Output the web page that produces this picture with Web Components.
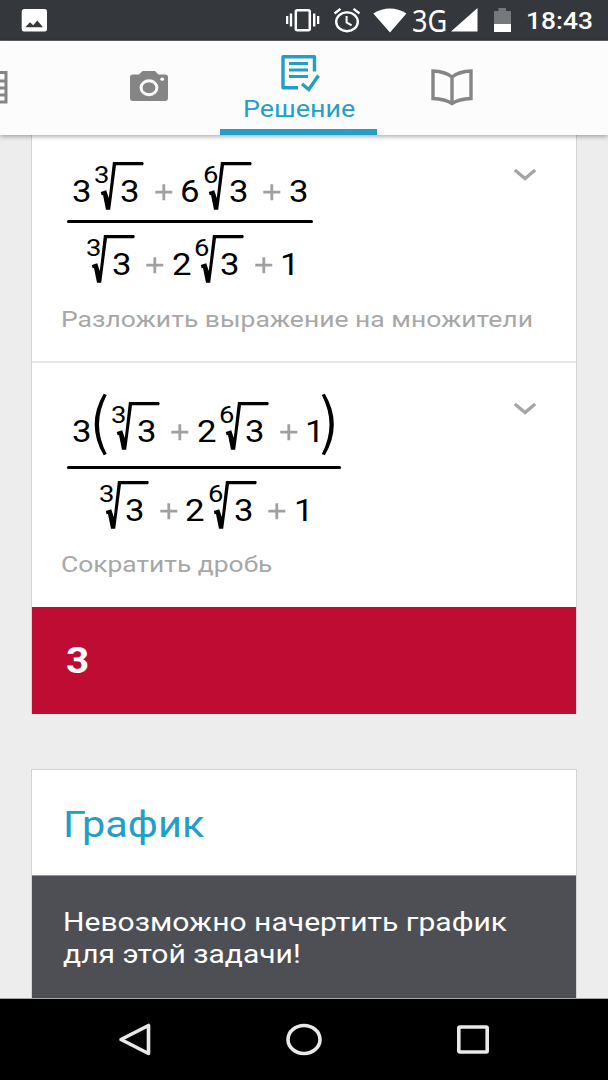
<!DOCTYPE html>
<html lang="ru">
<head>
<meta charset="utf-8">
<title>Решение</title>
<style>
html,body{margin:0;padding:0}
body{width:608px;height:1080px;overflow:hidden;font-family:Roboto,"Noto Sans",sans-serif;background:#ededed}
</style>
</head>
<body>
<math-app></math-app>
<script>
const define = (name, html, after) => customElements.define(name, class extends HTMLElement {
  constructor() {
    super();
    this.attachShadow({mode: 'open'});
  }
  connectedCallback() {
    this.shadowRoot.innerHTML = typeof html === 'function' ? html(this) : html;
    if (after) after(this);
  }
});

// One line of text stretched horizontally to the given width.
define('fit-label', el => `<style>
:host{display:block;width:${el.getAttribute('w')}px;white-space:nowrap}
span{display:inline-block;transform-origin:0 50%}
</style><span>${el.getAttribute('text')}</span>`, el => {
  const s = el.shadowRoot.querySelector('span');
  s.style.transform = `scaleX(${el.getAttribute('w') / s.offsetWidth})`;
});

define('status-bar', `<style>
:host{display:flex;box-sizing:border-box;height:41px;background:#34373b;border-bottom:1px solid #63666a;color:#fff;padding:0 0 0 21px;align-items:flex-start}
svg{display:block;flex:none;margin-top:8px}
.net{font:400 31px/40px "Noto Sans";margin:0 3px 0 5px;height:40px}
.time{font-size:24px;font-weight:500;line-height:42px;margin-left:14px}
</style>
<svg width="26" height="24" viewBox="0 0 26 24"><path fill="#fff" fill-rule="evenodd" d="M3 1H23.500Q26 1 26 3.500V21Q26 23.500 23.500 23.500H3Q.7 23.500.7 21V3.500Q.7 1 3 1ZM4.300 19.200H22L16.300 12.500L12.200 17.300L9 14.200Z"/></svg>
<svg style="margin-left:238px" width="36" height="24" viewBox="0 0 36 24"><g fill="#fff"><path d="M1 8h2.300v8H1zM4.800 5.500h2.400v13H4.800zM28 5.500h2.400v13H28zM32 8h2.300v8H32z"/></g><rect x="10.800" y="2.200" width="14" height="20" rx="1.500" fill="none" stroke="#fff" stroke-width="2.500"/></svg>
<svg style="margin-left:12px" width="28" height="25" viewBox="0 0 28 25"><g fill="none" stroke="#fff" stroke-width="2.400"><ellipse cx="14" cy="13.800" rx="10.800" ry="9.400"/><path d="M1.500 5.500L7.500.9M26.500 5.500L20.500.9"/><path d="M13.600 8V14.400L18.600 17.400" stroke-width="2"/></g></svg>
<svg style="margin-left:12px" width="34" height="25" viewBox="0 0 34 25"><path fill="#fff" d="M.3 5.500Q17-4.500 33.400 5.500L17 24.500Z"/></svg>
<fit-label class="net" w="35" text="3G"></fit-label>
<svg style="margin-left:1px" width="27" height="24" viewBox="0 0 27 24"><path fill="#fff" d="M0 23.500H26.500V0Z"/></svg>
<svg style="margin-left:15px" width="19" height="25" viewBox="0 0 19 25"><path fill="#76797b" d="M1 3H5.500V0H13V3H18V17H1Z"/><path fill="#fff" d="M1 16H18V24H1Z"/></svg>
<fit-label class="time" w="67" text="18:43"></fit-label>`);

define('tab-item', `<style>
:host{display:flex;flex-direction:column;align-items:center;height:94px;box-sizing:border-box;color:#858585}
:host([active]){color:#239fc6;border-bottom:6px solid #239fc6}
</style><slot></slot>`);

define('tab-strip', `<style>
:host{display:grid;grid-template-columns:78px 142px 157px 150px;height:94px;background:#fcfcfc;box-shadow:0 1px 5px rgba(0,0,0,.4);position:relative;z-index:1}
svg{display:block;flex:none}
fit-label{font-size:23px;line-height:28px;height:28px}
</style>
<tab-item style="align-items:flex-start"><svg style="margin-top:29px" width="9" height="36" viewBox="0 0 9 36"><path fill="none" stroke="#858585" stroke-width="3" d="M-3 2.500H6V32H-3M-3 11H6M-3 18H6M-3 25H6"/></svg></tab-item>
<tab-item><svg style="margin-top:29px" width="40" height="32" viewBox="0 0 40 32"><path fill="#858585" d="M4 4.500H10L13.500 1H26L29.500 4.500H36Q39 4.500 39 7V28Q39 31 36 31H4Q1 31 1 28V7Q1 4.500 4 4.500Z"/><ellipse cx="20" cy="17.700" rx="7.900" ry="7" fill="#858585" stroke="#fcfcfc" stroke-width="3"/><ellipse cx="33.200" cy="9.200" rx="1.900" ry="1.600" fill="#fcfcfc"/></svg></tab-item>
<tab-item active><svg style="margin:13px 0 0 4px" width="41" height="38" viewBox="0 0 41 38"><g fill="none" stroke="#239fc6" stroke-width="3.400"><path d="M18 33.700H3V2.700H34.500V17.500" stroke-linejoin="round"/><path d="M9 9.500H28M9 16H28M9 22.500H28" stroke-width="3"/><path d="M22 30L28.800 35.500L38.500 21.500"/></g></svg><fit-label w="112" text="Решение" style="margin-top:4px"></fit-label></tab-item>
<tab-item><svg style="margin-top:27px" width="44" height="40" viewBox="0 0 44 40"><path fill="none" stroke="#858585" stroke-width="3.400" stroke-linejoin="miter" d="M22 9Q15 3.500 3 3V30.500Q15 31 22 35.500Q29 31 41 30.500V3Q29 3.500 22 9V35"/></svg></tab-item>`);

// Formula parts: digit, plus sign, n-th root, tall bracket, fraction.
define('m-n', `<style>
:host{display:block;width:20px;height:48px;font-size:31px;line-height:60px;color:#000}
span{display:inline-block;transform:scaleX(1.12);transform-origin:0 50%;margin-left:.4px}
</style><span><slot></slot></span>`);
define('m-plus', `<style>
:host{display:block;width:36.500px;height:48px}svg{display:block}
</style><svg width="36.500" height="48" viewBox="0 0 36.500 48"><path d="M11.300 30.200H28.300M19.800 22.300V38.300" stroke="#a0a0a0" stroke-width="2.800"/></svg>`);
define('m-root', el => `<style>
:host{display:block;position:relative;width:52px;height:48px}
svg{position:absolute;inset:0;overflow:visible}
i{position:absolute;left:2.500px;top:-2px;font:24.500px/30px Roboto;transform:scaleX(1.12);transform-origin:0 50%}
m-n{margin-left:28.500px}
</style><i>${el.getAttribute('n')}</i><svg width="52" height="48" viewBox="0 0 52 48"><path fill="#000" d="M8.800 30L14.200 28.200L16.800 36L20.900 0H51Q52.400 1.500 51 3.200H24L18.200 47.800H14L11 33L9.600 33.200Z"/></svg><m-n><slot></slot></m-n>`);
define('m-paren', el => `<style>
:host{display:block;width:16.500px;height:48px}
svg{display:block;overflow:visible;${el.hasAttribute('close') ? 'transform:scaleX(-1)' : ''}}
</style><svg width="16.500" height="48" viewBox="0 0 16.500 48"><path fill="#000" d="M11.700 -8.200L14.700 -7Q7 8 7 22.500Q7 37 14.700 52L11.700 53.300Q2.700 38 2.700 22.500Q2.700 7 11.700 -8.200Z"/></svg>`);
define('m-frac', `<style>
:host{display:flex;flex-direction:column;width:max-content}
.n,.d{display:flex}
.n{padding:0 4px 0 5px}
.line{height:3px;border-radius:1.500px;background:#000;margin:var(--gap,10.500px) 0 12px}
.d{justify-content:center;padding-left:var(--shift,4px);margin-right:0}
</style><div class="n"><slot name="num"></slot></div><div class="line"></div><div class="d"><slot name="den"></slot></div>`);

define('step-row', el => `<style>
:host{display:flex;flex-direction:column;position:relative;box-sizing:border-box;padding-left:29px}
.head{display:flex;justify-content:space-between;padding-left:5.500px}
svg{display:block;margin:var(--chev) 39.500px 0 0}
fit-label{color:#a7a7a7;font-size:22.500px;line-height:30px}
</style><div class="head"><slot></slot><svg width="24" height="14" viewBox="0 0 24 14"><path d="M1.800 2L12 10.500L22.200 2" fill="none" stroke="#a5a5a5" stroke-width="3.300"/></svg></div>
<fit-label w="${el.getAttribute('w')}" text="${el.getAttribute('caption')}" style="margin-top:${el.getAttribute('gap')}px"></fit-label>`);

define('ui-card', `<style>
:host{display:block;box-sizing:border-box;width:546px;margin-left:31px;background:#fff;border:1px solid #d3d3d3}
</style><slot></slot>`);

define('nav-bar', `<style>
:host{display:grid;grid-template-columns:repeat(3,169px);padding-left:50px;align-items:center;box-sizing:border-box;height:82px;background:#000;border-top:1px solid #a5a6a8}
svg{display:block;margin:auto}
</style>
<svg width="34" height="34" viewBox="0 0 34 34"><path d="M3 16.500L30.500 2.500V30.500Z" fill="none" stroke="#e9e9e9" stroke-width="3.600" stroke-linejoin="round"/></svg>
<svg width="36" height="34" viewBox="0 0 36 34"><ellipse cx="18" cy="16.500" rx="16" ry="14" fill="none" stroke="#e9e9e9" stroke-width="3.600"/></svg>
<svg width="34" height="34" viewBox="0 0 34 34"><rect x="2.800" y="4" width="28.400" height="25" rx="1" fill="none" stroke="#e9e9e9" stroke-width="3.600"/></svg>`);

define('math-app', `<style>
:host{display:flex;flex-direction:column;width:608px;height:1080px;overflow:hidden}
main{height:863px;background:#ededed;overflow:hidden}
.steps{height:579px;border-top:0}
.one{padding-top:26.500px;--chev:6.500px;border-bottom:2px solid #e6e6e6;height:228px}
.two{height:243.500px;padding-top:38.500px;--chev:0px;--gap:16px;--shift:3px}
.result{display:flex;height:107px;background:#be0c33;color:#fff;font-size:37px;font-weight:700;line-height:108px;padding-left:34px;box-sizing:border-box}
.graph{margin-top:55px;height:240px}
.title{display:block;height:105px;font-size:36.500px;line-height:109px;color:#239fc6;padding-left:31px}
.msg{background:#4d4f54;color:#fff;height:130px;padding:30px 0 0 31px;font-size:26px;line-height:32px;border-top:1px solid #96979b;box-sizing:border-box}
</style>
<status-bar></status-bar>
<tab-strip></tab-strip>
<main>
<ui-card class="steps">
<step-row class="one" caption="Разложить выражение на множители" w="472" gap="20.500">
<m-frac>
<m-n slot="num">3</m-n><m-root slot="num" n="3">3</m-root><m-plus slot="num"></m-plus><m-n slot="num">6</m-n><m-root slot="num" n="6">3</m-root><m-plus slot="num"></m-plus><m-n slot="num">3</m-n>
<m-root slot="den" n="3">3</m-root><m-plus slot="den"></m-plus><m-n slot="den">2</m-n><m-root slot="den" n="6">3</m-root><m-plus slot="den"></m-plus><m-n slot="den">1</m-n>
</m-frac>
</step-row>
<step-row class="two" caption="Сократить дробь" w="211" gap="20.500">
<m-frac>
<m-n slot="num">3</m-n><m-paren slot="num"></m-paren><m-root slot="num" n="3">3</m-root><m-plus slot="num"></m-plus><m-n slot="num">2</m-n><m-root slot="num" n="6">3</m-root><m-plus slot="num"></m-plus><m-n slot="num">1</m-n><m-paren slot="num" close style="margin-left:-5px"></m-paren>
<m-root slot="den" n="3">3</m-root><m-plus slot="den"></m-plus><m-n slot="den">2</m-n><m-root slot="den" n="6">3</m-root><m-plus slot="den"></m-plus><m-n slot="den">1</m-n>
</m-frac>
</step-row>
<div class="result"><fit-label w="23" text="3"></fit-label></div>
</ui-card>
<ui-card class="graph">
<div class="title"><fit-label w="141" text="График"></fit-label></div>
<div class="msg"><fit-label w="444" text="Невозможно начертить график"></fit-label><fit-label w="238" text="для этой задачи!"></fit-label></div>
</ui-card>
</main>
<nav-bar></nav-bar>`);
</script>
</body>
</html>
